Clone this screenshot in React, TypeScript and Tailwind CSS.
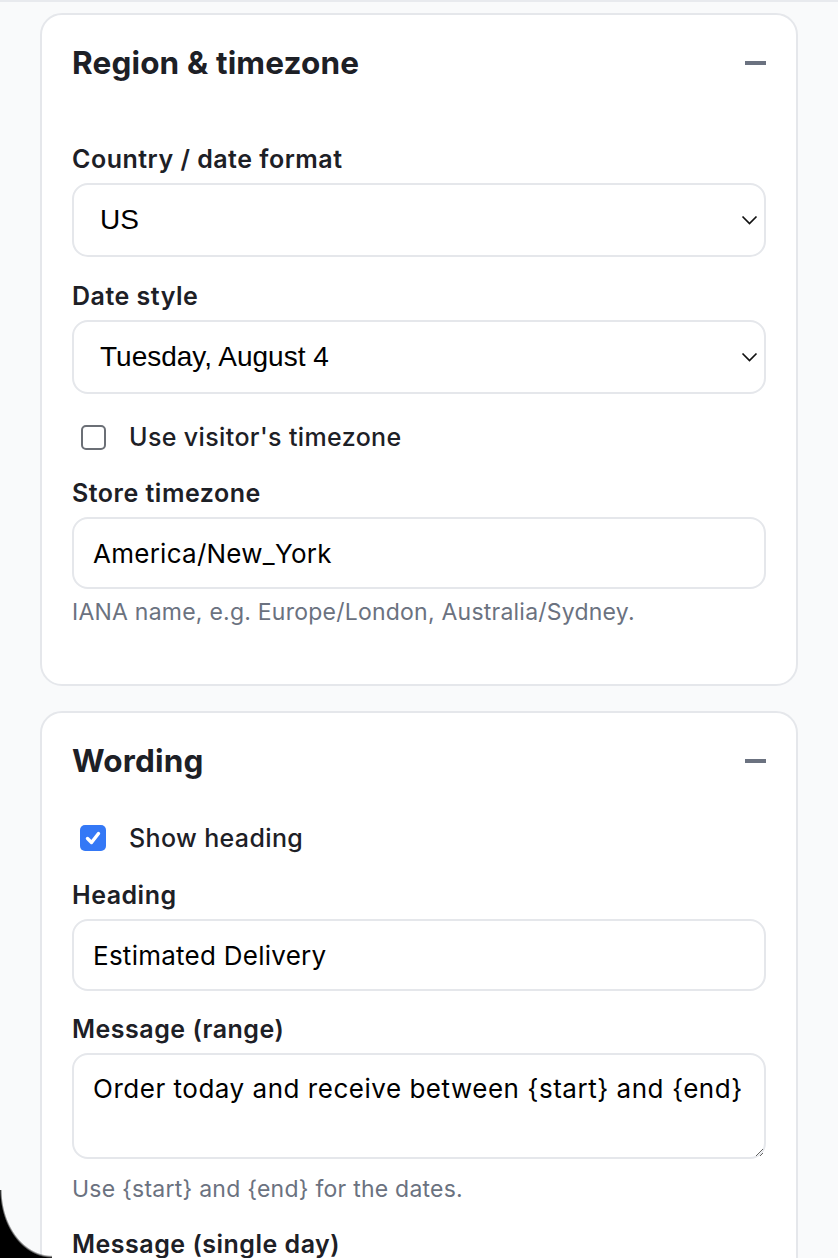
import React from "react";

const sans = "font-['Inter','Noto_Sans',sans-serif]";
const labelCls = `block text-[25px] leading-[30px] font-semibold tracking-[0.02em] text-[#1d2026] ${sans}`;
const helperCls = `text-[23px] leading-[26px] tracking-[0.01em] text-[#6b7280] ${sans}`;
const inputCls = `block w-full h-[72px] rounded-[16px] border-2 border-[#e5e7eb] bg-white px-[19px] text-[26px] tracking-[0.01em] text-black outline-none ${sans}`;

function Minus() {
  return <div className="w-[21px] h-[4px] bg-[#6b7280]" />;
}

function Chevron() {
  return (
    <svg width="17" height="10" viewBox="0 0 17 10" fill="none" className="pointer-events-none absolute right-[8px] top-1/2 -translate-y-1/2">
      <polyline points="1.5,1.5 8.5,8.5 15.5,1.5" stroke="#111" strokeWidth="1.7" fill="none" />
    </svg>
  );
}

function Select({ value }: { value: string }) {
  return (
    <div className="relative">
      <select
        defaultValue={value}
        className="block w-full h-[74px] appearance-none rounded-[16px] border-2 border-[#e5e7eb] bg-white pl-[26px] pr-[40px] text-[28px] text-black outline-none font-['Liberation_Sans',Arial,sans-serif]"
      >
        <option>{value}</option>
      </select>
      <Chevron />
    </div>
  );
}

function Checkbox({ checked, label }: { checked: boolean; label: string }) {
  return (
    <div className="flex items-center h-[30px] pl-[8px]">
      {checked ? (
        <div className="w-[26px] h-[26px] rounded-[5px] bg-[#3478f6] flex items-center justify-center">
          <svg width="18" height="18" viewBox="0 0 18 18" fill="none">
            <polyline points="3.5,9.5 7.5,13.5 14.5,4.5" stroke="white" strokeWidth="3.4" strokeLinecap="round" strokeLinejoin="round" fill="none" />
          </svg>
        </div>
      ) : (
        <div className="w-[25px] h-[25px] rounded-[5px] border-2 border-[#6b6f76] bg-white ml-[1px]" />
      )}
      <span className={`ml-[23px] text-[25px] leading-[30px] font-medium tracking-[0.015em] text-[#1d2026] ${sans}`}>{label}</span>
    </div>
  );
}

function CardHeader({ title }: { title: string }) {
  return (
    <div className="flex items-center justify-between h-[36px]">
      <h2 className={`text-[31.5px] leading-[36px] font-bold tracking-[0.005em] text-[#1d2026] ${sans}`}>{title}</h2>
      <Minus />
    </div>
  );
}

export default function App() {
  return (
    <div className="relative h-[1258px] overflow-hidden bg-[#f9fafb]">
      <div className="h-[2px] bg-[#e8eaee]" />
      <div className="mx-[40px] mt-[11px] rounded-[22px] border-2 border-[#e5e7eb] bg-white px-[30px] pt-[30px] pb-[59px]">
        <CardHeader title="Region & timezone" />
        <div className="mt-[63px]">
          <label className={labelCls}>Country / date format</label>
          <div className="mt-[9px]">
            <Select value="US" />
          </div>
        </div>
        <div className="mt-[24px]">
          <label className={labelCls}>Date style</label>
          <div className="mt-[9px]">
            <Select value="Tuesday, August 4" />
          </div>
        </div>
        <div className="mt-[28px]">
          <Checkbox checked={false} label="Use visitor's timezone" />
        </div>
        <div className="mt-[26px]">
          <label className={labelCls}>Store timezone</label>
          <input className={`mt-[9px] h-[71px] ${inputCls}`} defaultValue="America/New_York" />
          <p className={`mt-[10px] ${helperCls}`}>IANA name, e.g. Europe/London, Australia/Sydney.</p>
        </div>
      </div>

      <div className="mx-[40px] mt-[25px] rounded-[22px] border-2 border-[#e5e7eb] bg-white px-[30px] pt-[30px] pb-[60px]">
        <CardHeader title="Wording" />
        <div className="mt-[44px]">
          <Checkbox checked={true} label="Show heading" />
        </div>
        <div className="mt-[27px]">
          <label className={labelCls}>Heading</label>
          <input className={`mt-[9px] ${inputCls}`} defaultValue="Estimated Delivery" />
        </div>
        <div className="mt-[23px]">
          <label className={labelCls}>Message (range)</label>
          <textarea
            className={`mt-[9px] block w-full h-[106px] resize-y rounded-[16px] border-2 border-[#e5e7eb] bg-white px-[19px] pt-[17px] text-[26px] leading-[34px] tracking-[0.02em] text-black outline-none ${sans}`}
            defaultValue="Order today and receive between {start} and {end}"
          />
          <p className={`mt-[17px] ${helperCls}`}>Use {"{start}"} and {"{end}"} for the dates.</p>
        </div>
        <div className="mt-[27px]">
          <label className={labelCls}>Message (single day)</label>
          <input className={`mt-[9px] ${inputCls}`} defaultValue="Order today and receive it on {date}" />
        </div>
      </div>

      <div className="pointer-events-none absolute left-0 bottom-0 w-[52px] h-[68px] bg-[radial-gradient(52px_68px_at_100%_0%,transparent_96%,#000_100%)]" />
    </div>
  );
}
